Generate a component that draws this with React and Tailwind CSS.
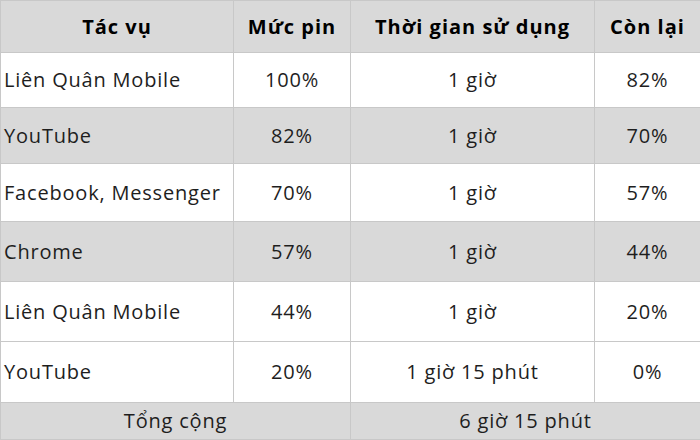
const rows = [
  { name: "Liên Quân Mobile", level: "100%", time: "1 giờ", left: "82%", h: "h-[55px]", bg: "bg-white" },
  { name: "YouTube", level: "82%", time: "1 giờ", left: "70%", h: "h-[56px]", bg: "bg-[#d9d9d9]" },
  { name: "Facebook, Messenger", level: "70%", time: "1 giờ", left: "57%", h: "h-[58px]", bg: "bg-white" },
  { name: "Chrome", level: "57%", time: "1 giờ", left: "44%", h: "h-[60px]", bg: "bg-[#d9d9d9]" },
  { name: "Liên Quân Mobile", level: "44%", time: "1 giờ", left: "20%", h: "h-[60px]", bg: "bg-white" },
  { name: "YouTube", level: "20%", time: "1 giờ 15 phút", left: "0%", h: "h-[61px]", bg: "bg-white" },
];

const cell = "border border-[#c8c8c8] p-0";

export default function App() {
  return (
    <div className="w-[700px] h-[440px] overflow-hidden bg-white font-['Open_Sans',sans-serif] text-[20px] tracking-[0.04em] text-[#1e1e1e]">
      <table className="w-[700px] border-collapse table-fixed">
        <colgroup>
          <col className="w-[233px]" />
          <col className="w-[117px]" />
          <col className="w-[244px]" />
          <col className="w-[106px]" />
        </colgroup>
        <thead>
          <tr className="h-[52px] bg-[#d9d9d9] font-bold text-black tracking-[0.05em]">
            <th className={cell}>Tác vụ</th>
            <th className={cell}>Mức pin</th>
            <th className={cell}>Thời gian sử dụng</th>
            <th className={cell}>Còn lại</th>
          </tr>
        </thead>
        <tbody>
          {rows.map((r, i) => (
            <tr key={i} className={`${r.h} ${r.bg}`}>
              <td className={`${cell} text-left pl-[3px]`}>{r.name}</td>
              <td className={`${cell} text-center`}>{r.level}</td>
              <td className={`${cell} text-center`}>{r.time}</td>
              <td className={`${cell} text-center`}>{r.left}</td>
            </tr>
          ))}
          <tr className="h-[37px] bg-[#d9d9d9]">
            <td colSpan={2} className={`${cell} text-center`}>Tổng cộng</td>
            <td colSpan={2} className={`${cell} text-center`}>6 giờ 15 phút</td>
          </tr>
        </tbody>
      </table>
    </div>
  );
}
